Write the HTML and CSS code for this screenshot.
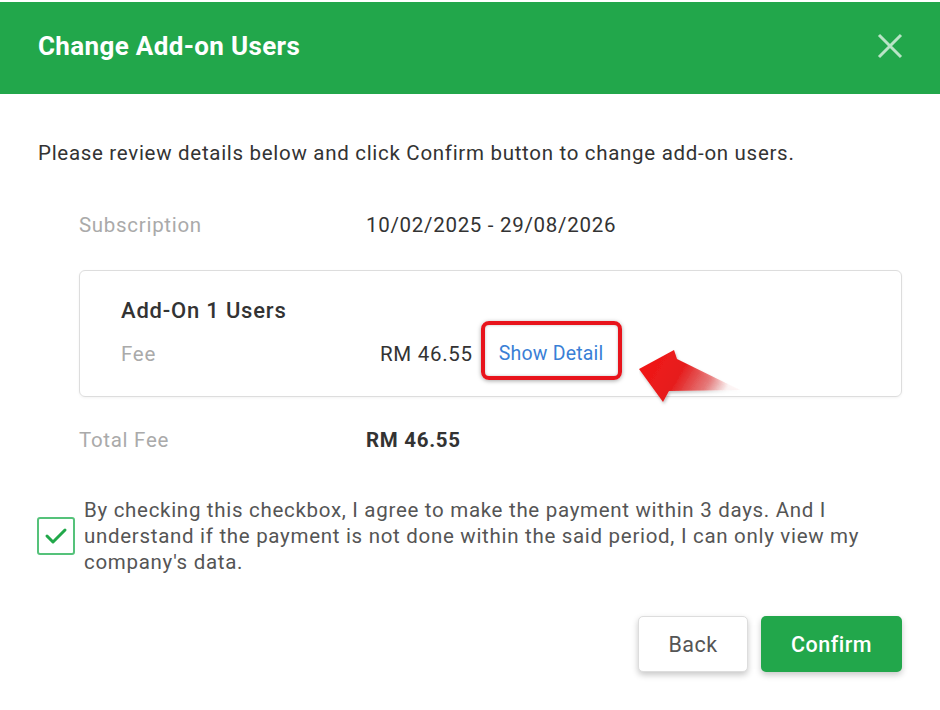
FILE: index.html
```html
<!DOCTYPE html>
<html>
<head>
<meta charset="utf-8">
<link rel="stylesheet" href="styles.css">
</head>
<body>
<div class="dialog">
  <div class="header">
    <h1 class="title">Change Add-on Users</h1>
    <svg class="close" width="26" height="26" viewBox="0 0 26 26"><path d="M2 2 L24 24 M24 2 L2 24" stroke="#b9e4c6" stroke-width="3" fill="none"/></svg>
  </div>
  <div class="body">
    <p class="intro">Please review details below and click Confirm button to change add-on users.</p>
    <div class="row sub-row">
      <span class="label">Subscription</span>
      <span class="value">10/02/2025 - 29/08/2026</span>
    </div>
    <div class="card">
      <div class="card-title">Add-On 1 Users</div>
      <div class="fee-row">
        <span class="label fee-label">Fee</span>
        <span class="fee-amount">RM 46.55</span>
        <span class="highlight"><a class="link">Show Detail</a></span>
      </div>
      <svg class="arrow" width="110" height="60" viewBox="0 0 110 60">
        <defs>
          <linearGradient id="ag" x1="0" y1="0" x2="1" y2="0.3">
            <stop offset="0" stop-color="#f41414"/>
            <stop offset="0.5" stop-color="#e61e1e"/>
            <stop offset="0.8" stop-color="#e23a3a" stop-opacity="0.6"/>
            <stop offset="1" stop-color="#e05050" stop-opacity="0.05"/>
          </linearGradient>
          <filter id="sh" x="-20%" y="-20%" width="140%" height="140%">
            <feDropShadow dx="1" dy="2" stdDeviation="1.5" flood-color="#000" flood-opacity="0.25"/>
          </filter>
        </defs>
        <polygon points="0,22 35,3 38,12 101,43 30,44 24,55" fill="url(#ag)" filter="url(#sh)"/>
      </svg>
    </div>
    <div class="row total-row">
      <span class="label">Total Fee</span>
      <span class="value bold">RM 46.55</span>
    </div>
    <div class="agree">
      <span class="checkbox"><svg width="24" height="20" viewBox="0 0 24 20"><path d="M3 10 L9 16 L21 4" stroke="#21a84a" stroke-width="3" fill="none" stroke-linecap="round" stroke-linejoin="round"/></svg></span>
      <p class="agree-text">By checking this checkbox, I agree to make the payment within 3 days. And I understand if the payment is not done within the said period, I can only view my company's data.</p>
    </div>
    <div class="actions">
      <button class="btn btn-back">Back</button>
      <button class="btn btn-confirm">Confirm</button>
    </div>
  </div>
</div>
</body>
</html>
```

FILE: styles.css
```css
* { box-sizing: border-box; }
html, body { margin: 0; padding: 0; background: #fff; }
body { font-family: Roboto, "Liberation Sans", Arial, sans-serif; }
.dialog { width: 940px; height: 710px; background: #fff; overflow: hidden; }
.header {
  margin-top: 2px;
  height: 92px;
  background: #22a74b;
  display: flex;
  align-items: center;
  justify-content: space-between;
  padding: 0 37px 0 38px;
}
.title { margin: -4px 0 0 0; color: #fff; font-size: 26px; font-weight: 700; letter-spacing: 0.35px; }
.close { margin-top: -4px; }
.body { padding: 0 38px 0 38px; }
.intro { margin: 44px 0 0 0; font-size: 20.5px; letter-spacing: 0.7px; line-height: 30px; color: #333; }
.row { display: flex; align-items: center; padding-left: 41px; height: 30px; font-size: 20.5px; letter-spacing: 0.7px; }
.sub-row { margin-top: 42px; }
.label { color: #aaa; width: 287px; }
.value { color: #333; }
.bold { font-weight: 700; }
.card {
  position: relative;
  margin: 30px 0 0 41px;
  width: 823px;
  height: 127px;
  border: 1px solid #ddd;
  border-radius: 6px;
  padding: 26px 0 0 41px;
  box-shadow: 0 1px 3px rgba(0,0,0,0.05);
}
.card-title { font-size: 22px; letter-spacing: 0.8px; font-weight: 500; color: #333; line-height: 28px; }
.fee-row { display: flex; align-items: center; margin-top: 0; height: 58px; font-size: 20.5px; letter-spacing: 0.7px; }
.fee-label { width: 259px; }
.fee-amount { color: #333; }
.highlight {
  margin-left: 8px;
  margin-top: -8px;
  border: 4px solid #e8141c;
  border-radius: 8px;
  padding: 17px 15px 11px 14px;
  box-shadow: 0 1px 4px rgba(0,0,0,0.35), inset 0 0 3px rgba(0,0,0,0.25);
  line-height: 22px;
  letter-spacing: 0;
}
.link { color: #3a7fd6; font-size: 19.5px; letter-spacing: 0.2px; }
.arrow { position: absolute; left: 559px; top: 76px; }
.total-row { margin-top: 28px; }
.agree { display: flex; align-items: center; margin: 42px 0 0 -1px; }
.checkbox {
  flex: none;
  width: 38px; height: 38px;
  border: 2px solid #55c27a;
  border-radius: 3px;
  display: flex; align-items: center; justify-content: center;
}
.agree-text { margin: 0 0 0 9px; font-size: 20.5px; letter-spacing: 0.7px; line-height: 26px; color: #555; width: 790px; }
.actions { display: flex; justify-content: flex-end; gap: 13px; margin-top: 41px; padding-right: 0; }
.btn {
  height: 56px;
  border-radius: 5px;
  font-family: Roboto, "Liberation Sans", Arial, sans-serif;
  font-size: 21.5px;
  letter-spacing: 0.5px;
  cursor: pointer;
  box-shadow: 0 3px 6px rgba(0,0,0,0.22);
}
.btn-back { width: 110px; background: #fff; color: #555; border: 1px solid #ddd; }
.btn-confirm { width: 141px; background: #22a74b; color: #fff; border: none; font-weight: 500; }
```
